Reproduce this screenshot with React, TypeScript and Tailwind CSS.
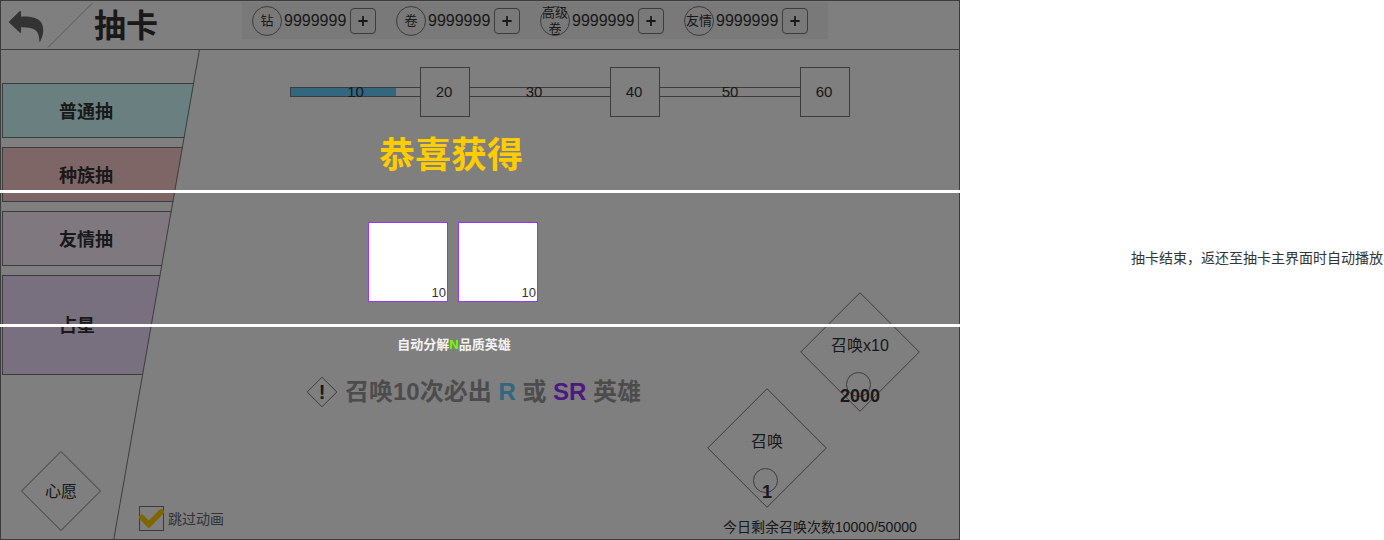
import type { ReactNode } from "react";

const currencies = [
  { name: "钻", amount: "9999999" },
  { name: "卷", amount: "9999999" },
  { name: "高级卷", amount: "9999999" },
  { name: "友情", amount: "9999999" },
];

const pools = [
  { name: "普通抽", style: "h-[55px] bg-[#d4ffff]" },
  { name: "种族抽", style: "h-[55px] bg-[#ffcccc]" },
  { name: "友情抽", style: "h-[55px] bg-[#fff2ff]" },
  { name: "占星", style: "h-[100px] bg-[#f0dfff]" },
];

const rewards = [{ count: 10 }, { count: 10 }];

function DiamondOutline() {
  return (
    <svg
      className="absolute inset-0 h-full w-full"
      viewBox="0 0 100 100"
      preserveAspectRatio="none"
      fill="none"
      stroke="#797979"
      aria-hidden="true"
    >
      <path d="M50 0.6 L99.4 50 L50 99.4 L0.6 50 Z" vectorEffect="non-scaling-stroke" />
    </svg>
  );
}

function Currency({ name, amount }: { name: string; amount: string }) {
  return (
    <div className="flex items-center">
      <span className="flex h-[30px] w-[30px] items-center justify-center rounded-full border border-[#797979]">
        <span className="-mx-px w-[28px] shrink-0 text-center text-[13px] leading-4">{name}</span>
      </span>
      <span className="ml-[2px] w-[66px] text-base leading-5">{amount}</span>
      <button
        type="button"
        aria-label={`增加${name}`}
        className="flex h-[26px] w-[26px] items-center justify-center rounded border border-[#797979]"
      >
        <svg viewBox="0 0 12 12" className="h-3 w-3" stroke="#333333" strokeWidth="1.8" aria-hidden="true">
          <path d="M1.400 6 H10.600 M6 1 V11" />
        </svg>
      </button>
    </div>
  );
}

function Track({ label, className, children }: { label: string; className: string; children?: ReactNode }) {
  return (
    <div className={`relative flex h-[10px] items-center justify-center border-y border-[#797979] ${className}`}>
      {children}
      <span className="relative text-[15px] leading-5">{label}</span>
    </div>
  );
}

function Milestone({ label }: { label: string }) {
  return (
    <div className="flex h-[50px] w-[50px] items-center justify-center border border-[#797979] pr-[2px] text-[15px] leading-5">
      {label}
    </div>
  );
}

function SummonButton({ label, cost, className }: { label: string; cost: string; className: string }) {
  return (
    <button type="button" className={className}>
      <DiamondOutline />
      <span className="relative mt-[42px] h-6 text-base leading-6">{label}</span>
      <span className="relative mt-[14px] mr-[3px] h-[25px] w-[25px] shrink-0 rounded-full border border-[#797979]" />
      <span className="relative -mt-[11px] text-lg leading-5 font-bold">{cost}</span>
    </button>
  );
}

function Header() {
  return (
    <header className="flex h-[49px] items-start border-b border-[#797979]">
      <button type="button" aria-label="返回" className="mt-[9px] ml-2 h-[33px] w-[35px] shrink-0">
        <svg viewBox="0 0 35 33" className="h-full w-full" fill="#666666" aria-hidden="true">
          <path d="M0.300 11.300 L10.600 1.300 Q12 0.300 12 2 V6.600 C25 6.400 34.200 8.500 34.200 20 C34.200 24 33 28 31.200 31.600 Q30.500 32.600 30.400 31.200 C30.200 20.500 26 17 12 17.200 V22 Q12 23.700 10.600 22.600 L0.300 12.800 Q-0.400 12 0.300 11.300 Z" />
        </svg>
      </button>
      <svg viewBox="0 0 50 48" className="ml-[3px] h-12 w-[50px] shrink-0" aria-hidden="true">
        <path d="M1 46.500 L45.500 2" stroke="#b0b0b0" fill="none" />
      </svg>
      <h1 className="-ml-[3px] w-[148px] shrink-0 pt-px text-[32px] leading-[48px] font-bold">抽卡</h1>
      <div className="mt-px flex h-[37px] w-[586px] shrink-0 items-center gap-5 bg-[#f2f2f2] pl-[10px]">
        {currencies.map((c) => (
          <Currency key={c.name} name={c.name} amount={c.amount} />
        ))}
      </div>
    </header>
  );
}

function Sidebar() {
  return (
    <div className="relative flex w-[199px] shrink-0">
      <nav className="flex w-full flex-col pt-[33px] pb-2 pl-px [clip-path:polygon(0_0,100%_0,56.8%_100%,0_100%)]">
        <ul className="flex flex-col gap-[9px]">
          {pools.map((p) => (
            <li key={p.name} className="flex">
              <button
                type="button"
                className={`w-full border border-[#797979] pt-[2px] pl-14 text-left text-lg font-bold ${p.style}`}
              >
                {p.name}
              </button>
            </li>
          ))}
        </ul>
        <button type="button" className="relative mt-auto ml-[19px] h-20 w-20 pt-[2px] text-base">
          <DiamondOutline />
          <span className="relative">心愿</span>
        </button>
      </nav>
      <svg
        className="absolute inset-0 h-full w-full"
        viewBox="0 0 100 100"
        preserveAspectRatio="none"
        aria-hidden="true"
      >
        <path d="M99.700 0 L56.700 100" stroke="#797979" fill="none" vectorEffect="non-scaling-stroke" />
      </svg>
    </div>
  );
}

function SkipAnimation() {
  return (
    <label className="-ml-[61px] flex items-center gap-1 text-sm text-[#666666]">
      <span className="relative block h-[25px] w-[25px]">
        <input
          type="checkbox"
          defaultChecked
          className="block h-full w-full appearance-none border border-[#797979]"
        />
        <svg viewBox="0 0 25 25" className="absolute inset-0 h-full w-full" aria-hidden="true">
          <path d="M2.800 11.500 L9.800 18.500 L22.200 6" stroke="#ffcc00" strokeWidth="5.600" strokeLinecap="round" fill="none" />
        </svg>
      </span>
      跳过动画
    </label>
  );
}

function RewardDialog() {
  return (
    <section
      role="dialog"
      aria-label="恭喜获得"
      className="absolute -inset-px flex flex-col bg-black/50 pt-[134px] text-center"
    >
      <h2 className="pr-[58px] text-4xl leading-[44px] font-bold text-[#ffcc00]">恭喜获得</h2>
      <div className="mt-3 flex justify-center gap-[10px] border-y-[3px] border-white pt-[29px] pr-[54px] pb-[22px]">
        {rewards.map((r, i) => (
          <RewardCard key={i}>{r.count}</RewardCard>
        ))}
      </div>
      <p className="mt-2 pr-[52px] text-[13px] leading-5 font-bold text-[#f2f2f2]">
        自动分解<span className="text-[#66ff00]">N</span>品质英雄
      </p>
    </section>
  );
}

function RewardCard({ children }: { children: ReactNode }) {
  return (
    <div className="flex h-20 w-20 items-end justify-end border border-[#9933ff] bg-white pr-px text-[13px] leading-4">
      {children}
    </div>
  );
}

export default function App() {
  return (
    <div className="flex min-h-screen bg-white font-['Liberation_Sans','Noto_Sans_CJK_SC',sans-serif] text-[#333333]">
      <main className="relative flex min-w-[960px] flex-1 flex-col border border-[#797979]">
        <Header />
        <div className="flex flex-1">
          <Sidebar />
          <div className="flex flex-1 flex-col">
            <div className="mt-[17px] ml-[90px] flex items-center">
              <Track label="10" className="w-[130px] border-l">
                <span className="absolute inset-y-0 left-0 w-[105px] bg-[#66ccff]" />
              </Track>
              <Milestone label="20" />
              <Track label="30" className="w-[140px] pr-3" />
              <Milestone label="40" />
              <Track label="50" className="w-[140px]" />
              <Milestone label="60" />
            </div>
            <div className="mt-[175px] flex flex-1 justify-between pr-[39px]">
              <div className="flex flex-col items-start justify-between pt-[85px] pb-2">
                <p className="ml-[107px] flex items-center gap-2 text-2xl leading-[30px] font-bold whitespace-pre text-[#999999]">
                  <span className="relative flex h-[30px] w-[30px] items-center justify-center text-xl text-[#333333]">
                    <DiamondOutline />
                    <span className="relative">!</span>
                  </span>
                  <span>
                    召唤10次必出 <span className="text-[#66ccff]">R</span> 或{" "}
                    <span className="text-[#9933ff]">SR</span> 英雄
                  </span>
                </p>
                <SkipAnimation />
              </div>
              <div className="flex w-[213px] flex-col">
                <SummonButton
                  label="召唤x10"
                  cost="2000"
                  className="relative flex h-[120px] w-[120px] flex-col items-center self-end"
                />
                <SummonButton
                  label="召唤"
                  cost="1"
                  className="relative -mt-6 flex h-[120px] w-[120px] flex-col items-center"
                />
                <p className="mt-[9px] ml-4 text-sm leading-5">今日剩余召唤次数10000/50000</p>
              </div>
            </div>
          </div>
        </div>
        <RewardDialog />
      </main>
      <aside className="w-[424px] shrink-0 pt-[248px] pr-px text-right text-sm leading-5">
        抽卡结束，返还至抽卡主界面时自动播放
      </aside>
    </div>
  );
}
